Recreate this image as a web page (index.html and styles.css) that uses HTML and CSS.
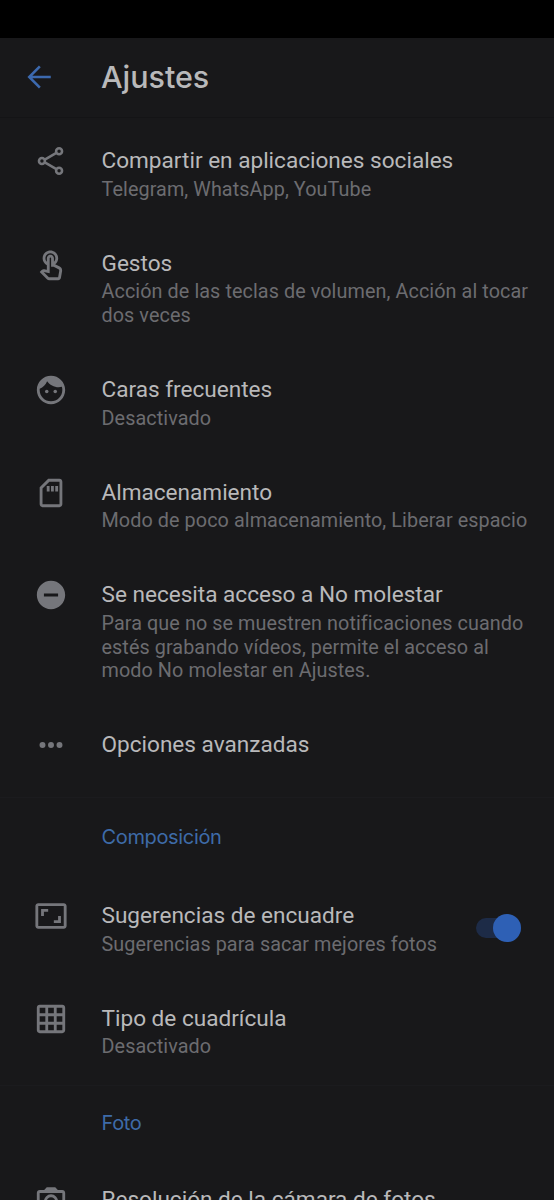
FILE: index.html
```html
<!DOCTYPE html>
<html lang="es">
<head>
<meta charset="utf-8">
<title>Ajustes</title>
<link rel="stylesheet" href="styles.css">
</head>
<body>
<div class="screen">
  <div class="status-bar"></div>
  <header class="app-bar">
    <svg class="back" viewBox="0 0 24 24"><path d="M20.300 12H5M12.600 4.500L5.100 12l7.500 7.500"/></svg>
    <h1 class="heading">Ajustes</h1>
  </header>
  <main class="list">
    <section class="row">
      <svg class="icon" viewBox="0 0 24 24"><g class="stroke"><path d="M7.6 11.1l8.2-4.8M7.6 12.9l8.2 4.8"/><circle cx="5.6" cy="12" r="2.1"/><circle cx="17.7" cy="5.1" r="2.1"/><circle cx="17.7" cy="18.9" r="2.1"/></g></svg>
      <div class="text"><h2 class="title">Compartir en aplicaciones sociales</h2><p class="summary">Telegram, WhatsApp, YouTube</p></div>
    </section>
    <section class="row">
      <svg class="icon icon-touch" viewBox="0 0 24 24"><path d="M18.19 12.44l-3.24-1.62c1.29-1 2.12-2.56 2.12-4.32 0-3.03-2.47-5.5-5.5-5.5s-5.5 2.47-5.5 5.5c0 2.13 1.22 3.98 3 4.89v3.26c-2.15-.46-2.02-.44-2.26-.44-.53 0-1.03.21-1.41.59L4 16.22l5.09 5.09c.43.44 1.03.69 1.65.69h6.3c.98 0 1.81-.7 1.97-1.67l.8-4.71c.22-1.3-.43-2.58-1.62-3.18zm-.35 2.85l-.8 4.71h-6.3c-.09 0-.17-.04-.24-.1l-3.68-3.68 4.25.89V6.5c0-.28.22-.5.5-.5s.5.22.5.5v6h1.76l3.46 1.73c.4.2.62.63.55 1.06zM8.07 6.5c0-1.93 1.57-3.5 3.5-3.5s3.5 1.57 3.5 3.5c0 .95-.38 1.81-1 2.44V6.5c0-1.38-1.12-2.5-2.5-2.5s-2.5 1.12-2.5 2.5v2.44c-.62-.63-1-1.49-1-2.44z"/></svg>
      <div class="text"><h2 class="title">Gestos</h2><p class="summary">Acción de las teclas de volumen, Acción al tocar<br>dos veces</p></div>
    </section>
    <section class="row">
      <svg class="icon" viewBox="0 0 24 24"><circle cx="9" cy="13" r="1.25"/><circle cx="15" cy="13" r="1.25"/><path d="M12 2C6.48 2 2 6.48 2 12s4.48 10 10 10 10-4.48 10-10S17.52 2 12 2zm0 18c-4.41 0-8-3.59-8-8 0-.29.02-.58.05-.86 2.36-1.05 4.23-2.98 5.21-5.37C11.07 8.33 14.05 10 17.42 10c.78 0 1.53-.09 2.25-.26.21.71.33 1.47.33 2.26 0 4.41-3.59 8-8 8z"/></svg>
      <div class="text"><h2 class="title">Caras frecuentes</h2><p class="summary">Desactivado</p></div>
    </section>
    <section class="row">
      <svg class="icon" viewBox="0 0 24 24"><path d="M18 2h-8L4 8v12c0 1.1.9 2 2 2h12c1.100 0 2-.9 2-2V4c0-1.100-.9-2-2-2zm0 18H6V8.830L10.830 4H18v16zM9 7h2v4H9zm3 0h2v4h-2zm3 0h2v4h-2z"/></svg>
      <div class="text"><h2 class="title">Almacenamiento</h2><p class="summary">Modo de poco almacenamiento, Liberar espacio</p></div>
    </section>
    <section class="row">
      <svg class="icon" viewBox="0 0 24 24"><path d="M12 2C6.480 2 2 6.480 2 12s4.480 10 10 10 10-4.480 10-10S17.520 2 12 2zm5 11H7v-2h10v2z"/></svg>
      <div class="text"><h2 class="title">Se necesita acceso a No molestar</h2><p class="summary">Para que no se muestren notificaciones cuando<br>estés grabando vídeos, permite el acceso al<br>modo No molestar en Ajustes.</p></div>
    </section>
    <section class="row row-single">
      <svg class="icon" viewBox="0 0 24 24"><circle cx="6" cy="12" r="2.1"/><circle cx="12" cy="12" r="2.1"/><circle cx="18" cy="12" r="2.1"/></svg>
      <div class="text"><h2 class="title">Opciones avanzadas</h2></div>
    </section>
  </main>
  <section class="group">
    <h3 class="category">Composición</h3>
    <div class="row">
      <svg class="icon" viewBox="0 0 24 24"><path d="M19 12h-2v3h-3v2h5v-5zM7 9h3V7H5v5h2V9zm14-6H3c-1.100 0-2 .9-2 2v14c0 1.100.9 2 2 2h18c1.100 0 2-.9 2-2V5c0-1.100-.9-2-2-2zm0 16.010H3V4.990h18v14.020z"/></svg>
      <div class="text"><h2 class="title">Sugerencias de encuadre</h2><p class="summary">Sugerencias para sacar mejores fotos</p></div>
      <div class="switch"><span class="thumb"></span></div>
    </div>
    <div class="row">
      <svg class="icon" viewBox="0 0 24 24"><path d="M20 2H4c-1.100 0-2 .9-2 2v16c0 1.100.9 2 2 2h16c1.100 0 2-.9 2-2V4c0-1.100-.9-2-2-2zM8 20H4v-4h4v4zm0-6H4v-4h4v4zm0-6H4V4h4v4zm6 12h-4v-4h4v4zm0-6h-4v-4h4v4zm0-6h-4V4h4v4zm6 12h-4v-4h4v4zm0-6h-4v-4h4v4zm0-6h-4V4h4v4z"/></svg>
      <div class="text"><h2 class="title">Tipo de cuadrícula</h2><p class="summary">Desactivado</p></div>
    </div>
  </section>
  <section class="group group-photo">
    <h3 class="category">Foto</h3>
    <div class="row row-single">
      <svg class="icon" viewBox="0 0 24 24"><path d="M20 5h-3.170L15 3H9L7.170 5H4c-1.100 0-2 .9-2 2v12c0 1.100.9 2 2 2h16c1.100 0 2-.9 2-2V7c0-1.100-.9-2-2-2zm0 14H4V7h16v12zM12 8a5 5 0 1 0 0 10 5 5 0 0 0 0-10zm0 8a3 3 0 1 1 0-6 3 3 0 0 1 0 6z"/></svg>
      <div class="text"><h2 class="title">Resolución de la cámara de fotos</h2></div>
    </div>
  </section>
</div>
</body>
</html>
```
FILE: styles.css
```css
* { box-sizing: border-box; }
body { margin: 0; background: #18181a; }
h1, h2, h3, p { margin: 0; font-weight: 400; }
.screen {
  height: 1200px;
  overflow: hidden;
  background: #18181a;
  font-family: Roboto, sans-serif;
  font-variant-ligatures: no-common-ligatures;
  color: #b9b9ba;
}
.status-bar { height: 38px; background: #000; }
.app-bar {
  display: flex;
  align-items: center;
  height: 80px;
  padding: 0 0 2px 22px;
  border-bottom: 1px solid #141416;
}
.back {
  width: 34px;
  height: 34px;
  margin-right: 45px;
  fill: none;
  stroke: #3c69ae;
  stroke-width: 1.800;
}
.heading {
  font: 500 30.500px/40px Inter, sans-serif;
  letter-spacing: -0.050px;
}
.list { height: 679px; padding-top: 4px; }
.row {
  display: flex;
  align-items: flex-start;
  padding: 26.300px 33px 23px 34px;
}
.row-single { padding-bottom: 26px; }
.icon {
  flex: none;
  width: 34px;
  height: 34px;
  margin: -4px 34px -4px 0;
  fill: #75767b;
}
.icon-touch { margin-top: -1.500px; }
.stroke { fill: none; stroke: #75767b; stroke-width: 1.8; }
.text { flex: 1; margin-left: -0.500px; white-space: nowrap; }
.title { font-size: 22.600px; line-height: 26.600px; letter-spacing: -0.010px; }
.summary {
  padding-top: 3px;
  font-size: 19.800px;
  line-height: 23.700px;
  letter-spacing: 0.080px;
  color: #6c6c70;
}
.group { height: 288px; border-top: 1px solid #1b1b1e; }
.category {
  height: 79px;
  padding: 23px 0 0 101.500px;
  font: 400 20px/32px Inter, sans-serif;
  letter-spacing: -0.350px;
  color: #3e6ba8;
}
.group-photo .category { height: 75px; padding-top: 21px; }
.switch {
  align-self: center;
  display: flex;
  align-items: center;
  justify-content: flex-end;
  width: 45px;
  height: 20px;
  margin-top: -3px;
  border-radius: 10px;
  background: #1d2b47;
}
.thumb { width: 28px; height: 28px; border-radius: 50%; background: #2e60b5; }
```
